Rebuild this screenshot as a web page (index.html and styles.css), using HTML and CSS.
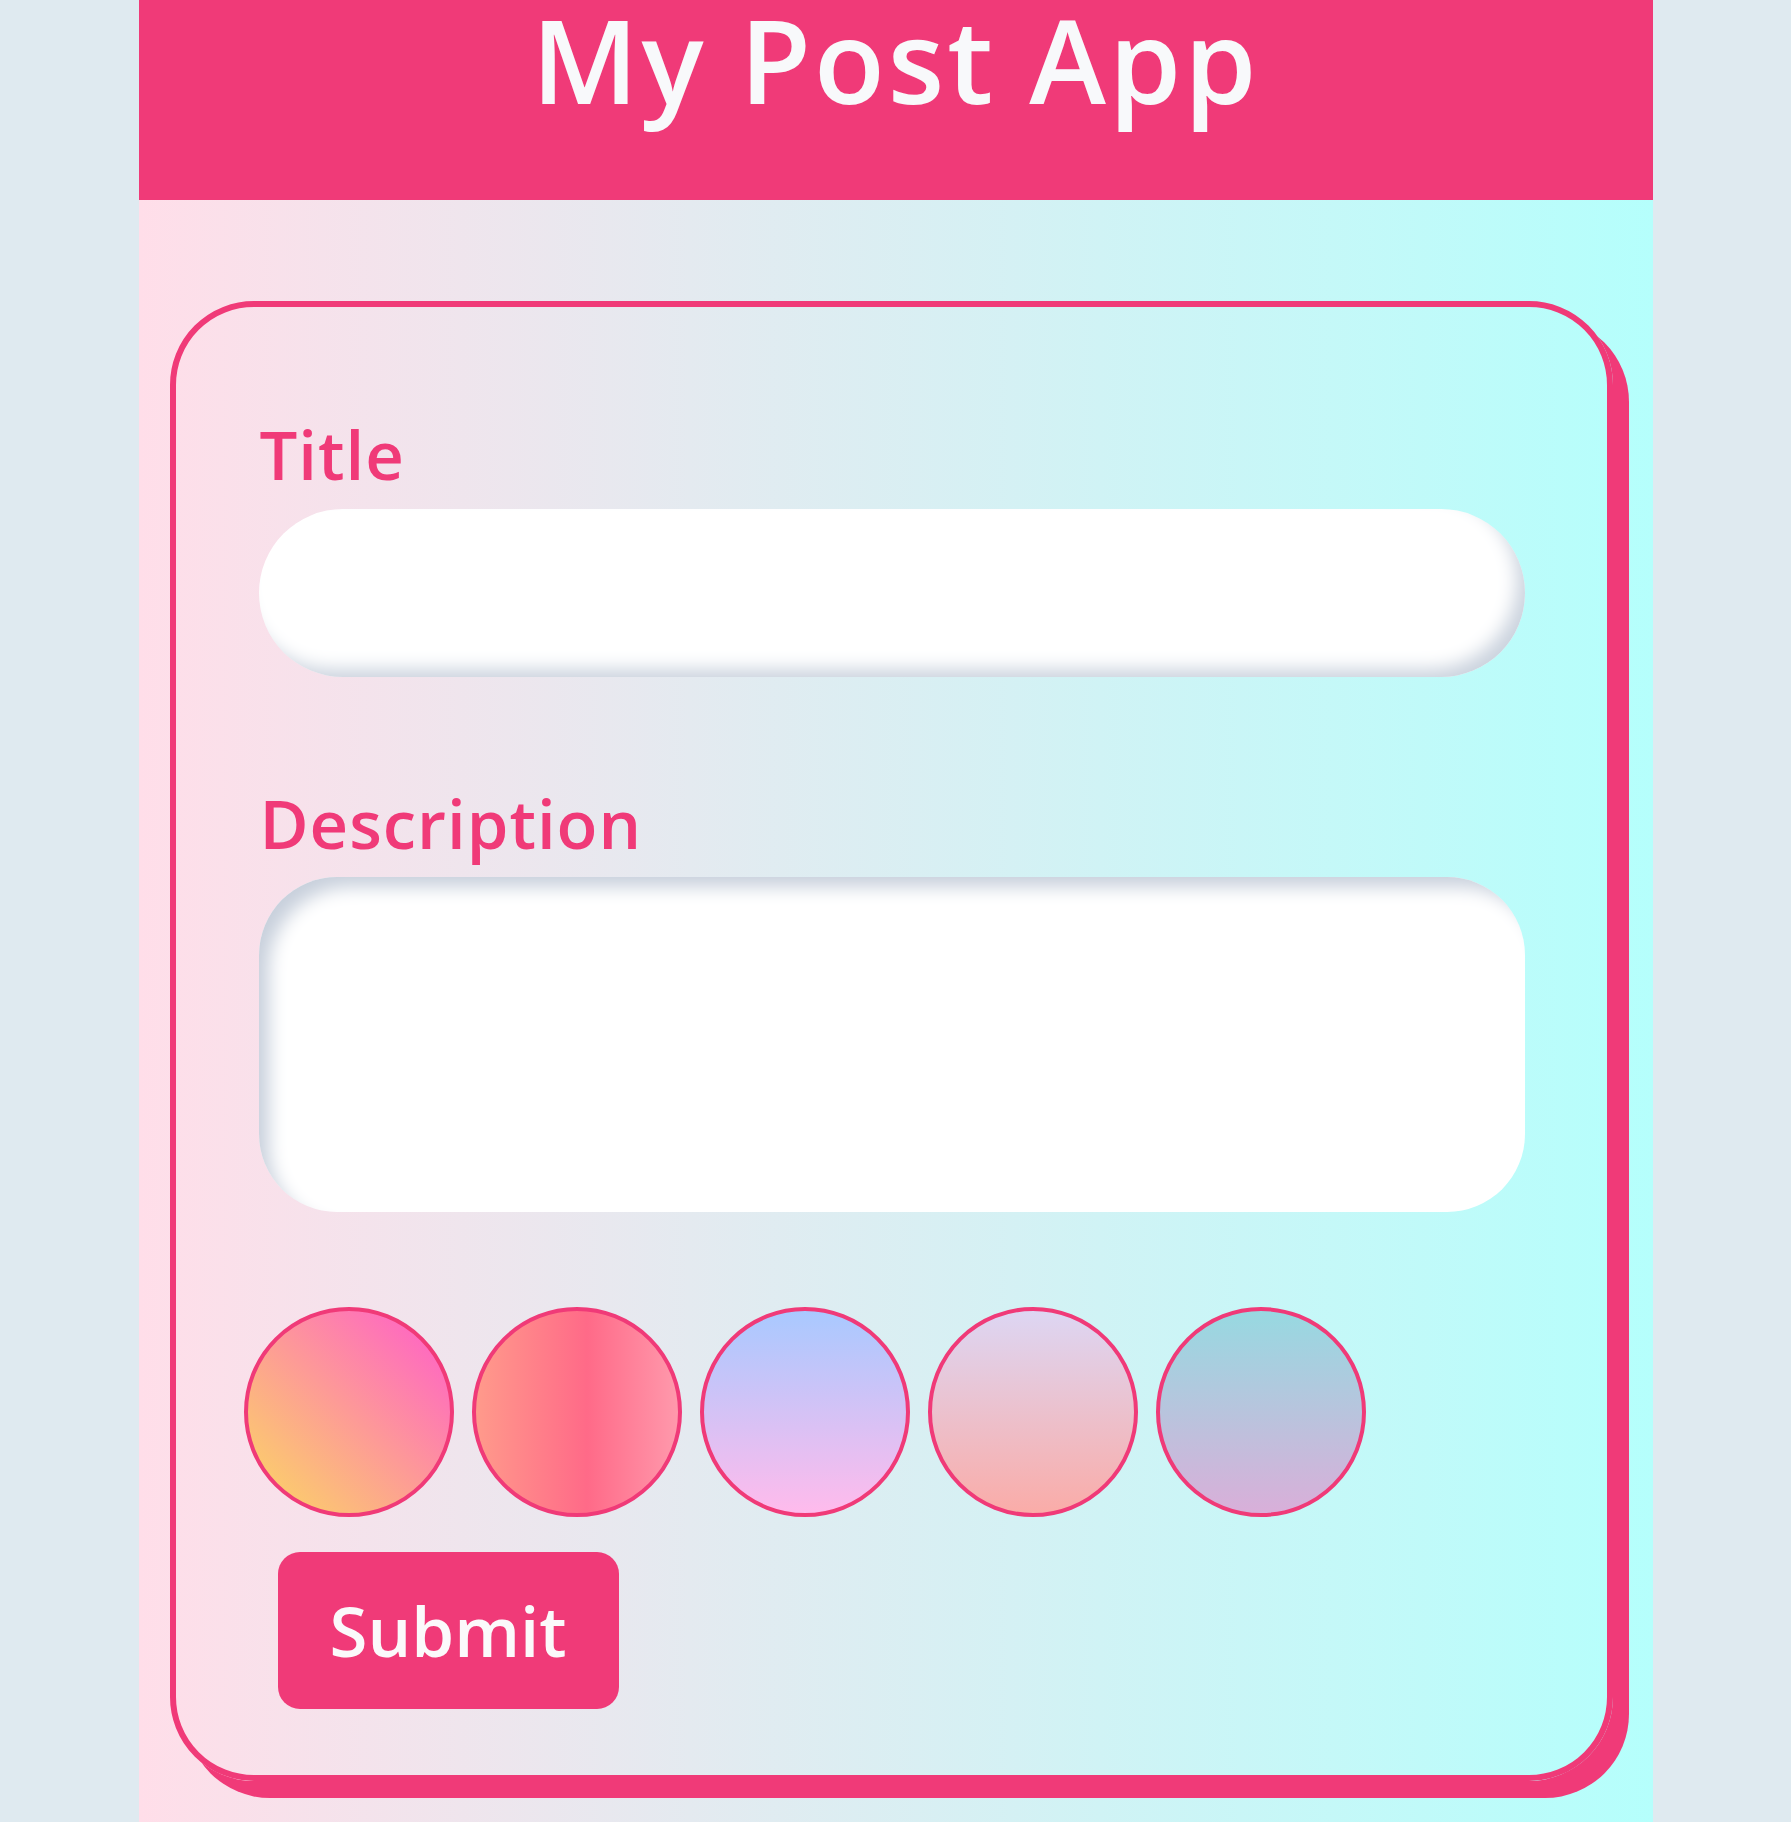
FILE: index.html
```html
<!DOCTYPE html>
<html lang="en">
<head>
<meta charset="utf-8">
<title>My Post App</title>
<link rel="stylesheet" href="styles.css">
</head>
<body>
<div class="app">
  <header class="app-header">
    <h1 class="app-title">My Post App</h1>
  </header>
  <main class="app-main">
    <form class="post-card">
      <label class="field-label label-title" for="title">Title</label>
      <input class="title-input" id="title" type="text">
      <label class="field-label label-desc" for="desc">Description</label>
      <textarea class="desc-input" id="desc"></textarea>
      <div class="swatches">
        <span class="swatch swatch-1"></span>
        <span class="swatch swatch-2"></span>
        <span class="swatch swatch-3"></span>
        <span class="swatch swatch-4"></span>
        <span class="swatch swatch-5"></span>
      </div>
      <button class="submit-btn" type="button">Submit</button>
    </form>
  </main>
</div>
</body>
</html>
```

FILE: styles.css
```css
* { box-sizing: border-box; }

html, body {
  margin: 0;
  padding: 0;
}

body {
  background: #dfeaf0;
  font-family: "Open Sans", "Noto Sans", sans-serif;
  height: 1822px;
  overflow: hidden;
}

.app {
  width: 1514px;
  margin: 0 auto;
  min-height: 1822px;
  display: flex;
  flex-direction: column;
}

.app-header {
  height: 200px;
  background: #f03a78;
  display: flex;
  justify-content: center;
  flex-shrink: 0;
}

.app-title {
  margin: 0;
  padding-top: 1px;
  font-size: 116px;
  line-height: 1;
  font-weight: 600;
  color: #f8f9fb;
  letter-spacing: 3px;
}

.app-main {
  flex: 1;
  background: linear-gradient(90deg, #ffdee9 0%, #b5fffc 100%);
  padding-top: 101px;
}

.post-card {
  margin-left: 31px;
  width: 1443px;
  height: 1480px;
  border: 6px solid #f03a78;
  border-radius: 84px;
  box-shadow: 16px 17px 0 #f03a78;
  padding: 0 82px 0 83px;
  display: flex;
  flex-direction: column;
  align-items: flex-start;
}

.field-label {
  display: block;
  font-size: 67px;
  line-height: 1;
  color: #f03a78;
  font-weight: 600;
  letter-spacing: 1px;
}

.label-title {
  margin-top: 114px;
  margin-left: 1px;
}

.label-desc {
  margin-top: 113px;
  margin-left: 1px;
}

.title-input {
  display: block;
  margin-top: 21px;
  width: 100%;
  height: 168px;
  border: none;
  outline: none;
  border-radius: 84px;
  background: #ffffff;
  box-shadow: inset -12px -12px 18px -4px #cbd3de;
  font: inherit;
}

.desc-input {
  display: block;
  margin-top: 20px;
  width: 100%;
  height: 335px;
  border: none;
  outline: none;
  border-radius: 78px;
  background: #ffffff;
  box-shadow: inset 14px 14px 18px -4px #c8d0dc;
  font: inherit;
  resize: none;
}

.swatches {
  display: flex;
  gap: 18px;
  margin-top: 95px;
  margin-left: -15px;
}

.swatch {
  display: block;
  width: 210px;
  height: 210px;
  border-radius: 50%;
  border: 4px solid #f03a78;
}

.swatch-1 { background: linear-gradient(45deg, #fbda61 0%, #ff5acd 100%); }
.swatch-2 { background: linear-gradient(90deg, #ff9a8b 0%, #ff6a88 55%, #ff99ac 100%); }
.swatch-3 { background: linear-gradient(180deg, #a9c9ff 0%, #ffbbec 100%); }
.swatch-4 { background: linear-gradient(0deg, #faaca8 0%, #ddd6f3 100%); }
.swatch-5 { background: linear-gradient(0deg, #d9afd9 0%, #97d9e1 100%); }

.submit-btn {
  margin-top: 35px;
  margin-left: 19px;
  width: 341px;
  height: 157px;
  border: none;
  border-radius: 22px;
  background: #f03a78;
  color: #fbf9fb;
  font-family: "Open Sans", "Noto Sans", sans-serif;
  font-size: 69px;
  font-weight: 600;
  line-height: 1;
  padding: 0;
}
```
